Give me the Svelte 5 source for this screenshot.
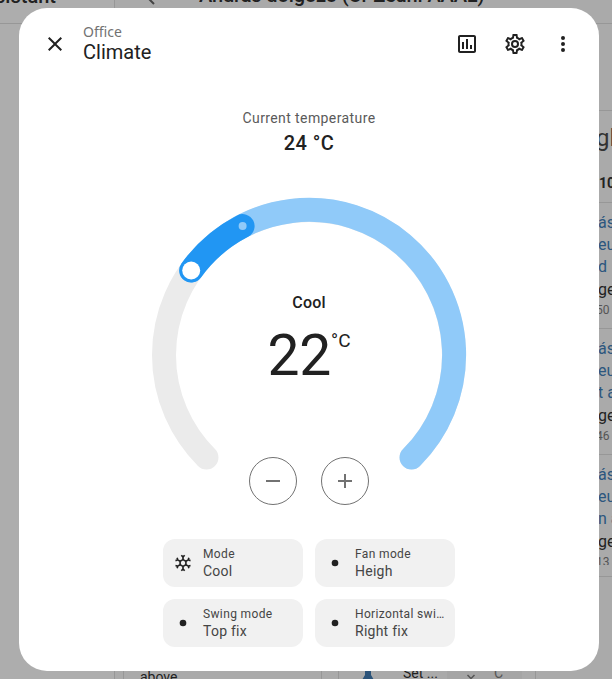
<script>
  const close = 'M19,6.41L17.59,5L12,10.59L6.41,5L5,6.41L10.59,12L5,17.59L6.41,19L12,13.41L17.59,19L19,17.59L13.41,12L19,6.41Z';
  const chart = 'M9 17H7V10H9V17M13 17H11V7H13V17M17 17H15V13H17V17M19 19H5V5H19V19.1M19 3H5C3.9 3 3 3.9 3 5V19C3 20.1 3.9 21 5 21H19C20.1 21 21 20.1 21 19V5C21 3.9 20.1 3 19 3Z';
  const cog = 'M12,8A4,4 0 0,1 16,12A4,4 0 0,1 12,16A4,4 0 0,1 8,12A4,4 0 0,1 12,8M12,10A2,2 0 0,0 10,12A2,2 0 0,0 12,14A2,2 0 0,0 14,12A2,2 0 0,0 12,10M10,22C9.75,22 9.54,21.82 9.5,21.58L9.13,18.93C8.5,18.68 7.96,18.34 7.44,17.94L4.95,18.95C4.73,19.03 4.46,18.95 4.34,18.73L2.34,15.27C2.21,15.05 2.27,14.78 2.46,14.63L4.57,12.97L4.5,12L4.57,11L2.46,9.37C2.27,9.22 2.21,8.95 2.34,8.73L4.34,5.27C4.46,5.05 4.73,4.96 4.95,5.05L7.44,6.05C7.96,5.66 8.5,5.32 9.13,5.07L9.5,2.42C9.54,2.18 9.75,2 10,2H14C14.25,2 14.46,2.18 14.5,2.42L14.87,5.07C15.5,5.32 16.04,5.66 16.56,6.05L19.05,5.05C19.27,4.96 19.54,5.05 19.66,5.27L21.66,8.73C21.79,8.95 21.73,9.22 21.54,9.37L19.43,11L19.5,12L19.43,13L21.54,14.63C21.73,14.78 21.79,15.05 21.66,15.27L19.66,18.73C19.54,18.95 19.27,19.04 19.05,18.95L16.56,17.95C16.04,18.34 15.5,18.68 14.87,18.93L14.5,21.58C14.46,21.82 14.25,22 14,22H10M11.25,4L10.88,6.61C9.68,6.86 8.62,7.5 7.85,8.39L5.44,7.35L4.69,8.65L6.8,10.2C6.4,11.37 6.4,12.64 6.8,13.8L4.68,15.36L5.43,16.66L7.86,15.62C8.63,16.5 9.68,17.14 10.87,17.38L11.24,20H12.76L13.13,17.39C14.32,17.14 15.37,16.5 16.14,15.62L18.57,16.66L19.32,15.36L17.2,13.81C17.6,12.64 17.6,11.37 17.2,10.2L19.31,8.65L18.56,7.35L16.15,8.39C15.38,7.5 14.32,6.86 13.12,6.62L12.75,4H11.25Z';
  const dots = 'M12,16A2,2 0 0,1 14,18A2,2 0 0,1 12,20A2,2 0 0,1 10,18A2,2 0 0,1 12,16M12,10A2,2 0 0,1 14,12A2,2 0 0,1 12,14A2,2 0 0,1 10,12A2,2 0 0,1 12,10M12,4A2,2 0 0,1 14,6A2,2 0 0,1 12,8A2,2 0 0,1 10,6A2,2 0 0,1 12,4Z';
  const minus = 'M19,13H5V11H19V13Z';
  const plus = 'M19,13H13V19H11V13H5V11H11V5H13V11H19V13Z';
  const dot = 'M12,8A4,4 0 1,1 12,16A4,4 0 1,1 12,8Z';
  const snow = 'M20.79,13.95L18.46,14.57L16.46,13.44V10.56L18.46,9.43L20.79,10.05L21.31,8.12L19.54,7.65L20,5.88L18.07,5.36L17.45,7.69L15.45,8.82L13,7.38V5.12L14.71,3.41L13.29,2L12,3.29L10.71,2L9.29,3.41L11,5.12V7.38L8.5,8.82L6.5,7.69L5.92,5.36L4,5.88L4.47,7.65L2.7,8.12L3.22,10.05L5.55,9.43L7.55,10.56V13.45L5.55,14.58L3.22,13.96L2.7,15.89L4.47,16.36L4,18.12L5.93,18.64L6.55,16.31L8.55,15.18L11,16.62V18.88L9.29,20.59L10.71,22L12,20.71L13.29,22L14.7,20.59L13,18.88V16.62L15.5,15.17L17.5,16.3L18.12,18.63L20,18.12L19.53,16.35L21.3,15.88L20.79,13.95M9.5,10.56L12,9.11L14.5,10.56V13.44L12,14.89L9.5,13.44V10.56Z';

  const modes = [
    { label: 'Mode', value: 'Cool', icon: snow },
    { label: 'Fan mode', value: 'Heigh', icon: dot },
    { label: 'Swing mode', value: 'Top fix', icon: dot },
    { label: 'Horizontal swing mode', value: 'Right fix', icon: dot }
  ];
  const log = [
    { lines: ['ás', 'eu', 'd'], time: '50' },
    { lines: ['ás', 'eu', 't a'], time: '46' },
    { lines: ['ás', 'eu', 'n a'], time: '13' }
  ];
</script>

{#snippet icon(path, size = 24)}
  <svg width={size} height={size} viewBox="0 0 24 24" fill="currentColor"><path d={path} /></svg>
{/snippet}

<div class="screen">
  <div class="page">
    <aside><div class="brand"><span>Home Assistant</span></div></aside>
    <main>
      <header>
        <svg width="12" height="18" viewBox="0 0 12 18" fill="none" stroke="#444" stroke-width="2"><path d="M10 1L2 9l8 8" /></svg>
        <span>András dolgozó (Cr Zeuni AAAL)</span>
      </header>
      <div class="columns">
        <div class="cards">
          <section class="note">above</section>
          <section class="control">
            <svg width="12" height="20" viewBox="0 0 12 20" fill="#2b5379"><path d="M3 0h6v10l3 5v5H0v-5l3-5z" /></svg>
            <span class="set">Set ...</span>
            <span class="select"><svg width="10" height="6" viewBox="0 0 10 6" fill="none" stroke="#555" stroke-width="1.5"><path d="M1.5 1L5 4.5L8.5 1" /></svg></span>
            <span class="unit">C</span>
          </section>
        </div>
        <div class="log">
          <h2>gl</h2>
          <h3>10</h3>
          {#each log as entry}
            <article>
              {#each entry.lines as line}<p class="link">{line}</p>{/each}
              <p>ge</p>
              <small>{entry.time}</small>
            </article>
          {/each}
        </div>
      </div>
    </main>
  </div>

  <div class="dialog">
    <div class="bar">
      <button>{@render icon(close)}</button>
      <div class="title"><span class="area">Office</span><span class="name">Climate</span></div>
      <button>{@render icon(chart)}</button>
      <button>{@render icon(cog)}</button>
      <button>{@render icon(dots)}</button>
    </div>

    <div class="current"><span>Current temperature</span><strong>24 °C</strong></div>

    <div class="dial">
      <svg width="320" height="320" viewBox="-160 -160 320 320" fill="none" stroke-linecap="round" stroke-width="24">
        <path d="M-102.53 102.53A145 145 0 1 1 102.53 102.53" stroke="#ebebeb" />
        <path d="M-117.8 -84.5A145 145 0 1 1 102.53 102.53" stroke="#90caf9" />
        <path d="M-117.8 -84.5A145 145 0 0 1 -66.4 -128.9" stroke="#2196f3" />
        <circle cx="-66.4" cy="-128.9" r="4" fill="#90caf9" />
        <circle cx="-117.8" cy="-84.5" r="9" fill="#fff" />
      </svg>
      <div class="readout">
        <div class="action">Cool</div>
        <div class="target">22<sup>°C</sup></div>
      </div>
      <div class="steps">
        <button>{@render icon(minus)}</button>
        <button>{@render icon(plus)}</button>
      </div>
    </div>

    <div class="modes">
      {#each modes as m}
        <div class="mode">
          {@render icon(m.icon, 20)}
          <div class="text"><span class="label">{m.label}</span><span class="value">{m.value}</span></div>
        </div>
      {/each}
    </div>
  </div>
</div>

<style>
  .screen { position: relative; width: 612px; height: 679px; overflow: hidden; font-family: Roboto, sans-serif; color: #212121; box-sizing: border-box; }
  .screen :global(*) { box-sizing: border-box; }
  svg { display: block; flex: none; }
  .page { display: flex; height: 679px; background: #aaa; }
  aside { width: 115px; flex: none; border-right: 1px solid #979797; background: #adadad; }
  .brand { height: 24px; border-bottom: 1px solid #979797; font-size: 20px; font-weight: 500; line-height: 0; white-space: nowrap; display: flex; justify-content: flex-end; align-items: flex-start; padding-right: 58px; }
  .brand span { margin-top: -4px; }
  main { flex: 1; min-width: 0; }
  header { height: 24px; display: flex; align-items: flex-start; gap: 43px; padding-left: 29px; border-bottom: 1px solid #979797; font-size: 20px; font-weight: 500; letter-spacing: -.13px; line-height: 0; white-space: nowrap; }
  header svg { margin-top: -13px; }
  header span { margin-top: -5px; }
  .columns { display: flex; height: 655px; }
  .cards { width: 481px; flex: none; display: flex; align-items: flex-end; padding-left: 8px; gap: 16px; }
  .note { width: 199px; height: 40px; border: 1px solid #979797; border-width: 0 1px; padding: 30px 0 0 16px; font-size: 14px; line-height: 16px; overflow: hidden; }
  .control { width: 198px; height: 40px; border: 1px solid #979797; border-width: 0 1px; display: flex; align-items: flex-start; padding: 26px 0 0 23px; font-size: 14px; line-height: 16px; overflow: hidden; }
  .set { width: 44px; margin: 0 0 0 29px; }
  .select { width: 33px; height: 40px; margin-top: -20px; padding: 29px 0 0 19px; background: #a5a5a5; }
  .unit { width: 42px; height: 40px; margin-top: -20px; padding: 20px 0 0 14px; background: #a5a5a5; color: #555; }
  .log { flex: 1; overflow: hidden; margin-top: 86px; border-top: 1px solid #979797; }
  h2, h3, p { margin: 0; font-weight: 400; }
  h2 { font-size: 24px; line-height: 32px; padding-top: 11px; color: #333; }
  h3 { font-size: 14px; font-weight: 700; line-height: 20px; padding: 19px 0 9px 3px; }
  article { height: 126px; border-top: 1px solid #979797; padding: 9px 0 0 2px; font-size: 16px; line-height: 22.2px; overflow: hidden; }
  article:last-child { height: 123px; border-bottom: 1px solid #979797; }
  .link { color: #2c567e; }
  article p { white-space: nowrap; }
  small { display: block; font-size: 12px; line-height: 18px; color: #555; margin-left: -2px; }
  article:last-child small { height: 12px; overflow: hidden; }

  .dialog { position: absolute; left: 19px; top: 8px; width: 580px; height: 663px; background: #fff; border-radius: 28px; display: flex; flex-direction: column; align-items: center; }
  .bar { width: 100%; height: 72px; padding: 0 12px; display: flex; align-items: center; }
  button { border: 0; background: none; padding: 0; width: 48px; height: 48px; display: flex; align-items: center; justify-content: center; color: #212121; }
  .title { flex: 1; display: flex; flex-direction: column; padding: 0 0 2px 4px; }
  .area { font-family: "Noto Sans", sans-serif; font-size: 14px; line-height: 18px; color: #727272; }
  .name { font-size: 20px; line-height: 22px; }
  .current { height: 115px; padding-top: 28px; display: flex; flex-direction: column; align-items: center; color: #5a5a5a; font-size: 14px; line-height: 20px; letter-spacing: .4px; }
  .current strong { font-size: 20px; font-weight: 500; line-height: 30px; color: #212121; letter-spacing: .4px; }
  .dial { position: relative; width: 320px; height: 320px; }
  .readout { position: absolute; inset: 0; display: flex; flex-direction: column; align-items: center; padding-top: 98px; }
  .action { font-size: 16px; font-weight: 500; line-height: 20px; letter-spacing: .15px; }
  .target { display: flex; align-items: flex-start; font-size: 57px; line-height: 64px; margin-top: 11px; letter-spacing: -.25px; }
  sup { font-size: 19px; line-height: 20px; letter-spacing: 0; margin-top: 7px; }
  .steps { position: absolute; left: 0; right: 0; bottom: 10px; display: flex; justify-content: center; gap: 24px; }
  .steps button { border: 1px solid #727272; border-radius: 50%; color: #727272; }
  .modes { display: grid; grid-template-columns: 140px 140px; gap: 12px; margin-top: 24px; }
  .mode { height: 48px; border-radius: 12px; background: #f1f1f1; display: flex; align-items: center; gap: 10px; padding: 0 10px; }
  .text { min-width: 0; display: flex; flex-direction: column; color: #454545; }
  .label { font-size: 12px; line-height: 16px; letter-spacing: .36px; white-space: nowrap; overflow: hidden; text-overflow: ellipsis; }
  .value { font-size: 14px; line-height: 18px; letter-spacing: .25px; }
</style>
